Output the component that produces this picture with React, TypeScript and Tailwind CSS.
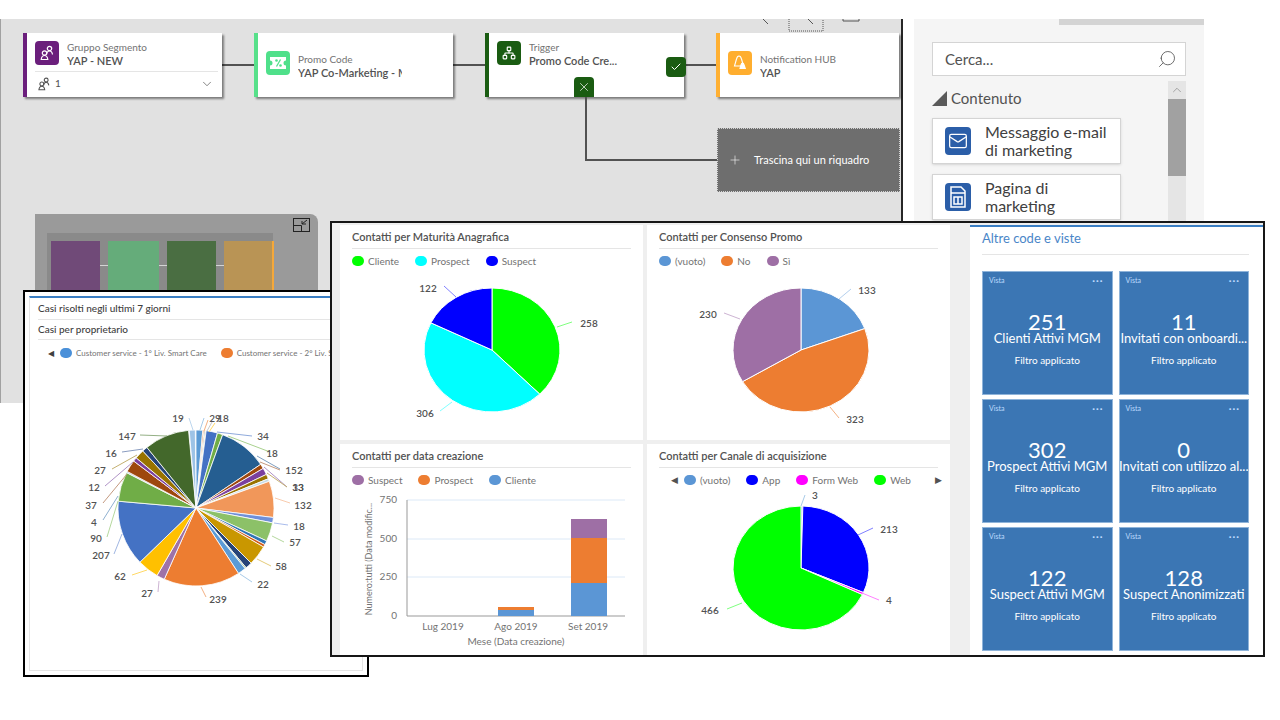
import React from "react";
import { Check, ChevronDown, ChevronUp, Network, Plus, Search, X, Mail } from "lucide-react";

type Slice = { c: string; from: number; to: number };
type Lab = { t: string; x: number; y: number };
type Lead = { x1: number; y1: number; x2: number; y2: number; c: string };

function pt(cx: number, cy: number, rx: number, ry: number, deg: number) {
  const a = (deg * Math.PI) / 180;
  return [cx + rx * Math.sin(a), cy - ry * Math.cos(a)];
}

function Pie({ cx, cy, rx, ry, slices, sw = 1 }: { cx: number; cy: number; rx: number; ry: number; slices: Slice[]; sw?: number }) {
  return (
    <g>
      {slices.map((s, i) => {
        const [x0, y0] = pt(cx, cy, rx, ry, s.from);
        const [x1, y1] = pt(cx, cy, rx, ry, s.to);
        const large = s.to - s.from > 180 ? 1 : 0;
        return <path key={i} d={`M${cx} ${cy}L${x0} ${y0}A${rx} ${ry} 0 ${large} 1 ${x1} ${y1}Z`} fill={s.c} stroke="#ffffff" strokeWidth={sw} />;
      })}
    </g>
  );
}

function fromValues(items: [string, number][]) {
  const total = items.reduce((a, b) => a + b[1], 0);
  let acc = 0;
  return items.map(([c, v]) => {
    const from = (acc / total) * 360;
    acc += v;
    return { c, from, to: (acc / total) * 360 };
  });
}

function Labels({ labels, leads }: { labels: Lab[]; leads: Lead[] }) {
  return (
    <g>
      {leads.map((l, i) => (
        <line key={i} x1={l.x1} y1={l.y1} x2={l.x2} y2={l.y2} stroke={l.c} strokeWidth={1} />
      ))}
      {labels.map((l, i) => (
        <text key={i} x={l.x} y={l.y} textAnchor="middle" dominantBaseline="central" className="fill-neutral-600 text-[10px] font-semibold">
          {l.t}
        </text>
      ))}
    </g>
  );
}

const bigSlices: Slice[] = [
  ["#5b9bd5", 0, 5], ["#ed7d31", 5, 6], ["#a5a5a5", 6, 7], ["#ffc000", 7, 7.5], ["#4472c4", 7.5, 16], ["#70ad47", 16, 20],
  ["#255e91", 20, 56], ["#9e480e", 56, 59.5], ["#7b3f9e", 59.5, 64.5], ["#997300", 64.5, 68], ["#c5dbe8", 68, 70],
  ["#f1975a", 70, 97], ["#6f8fd8", 97, 101], ["#8cc168", 101, 115], ["#2e75b6", 115, 118], ["#d05a1a", 118, 120],
  ["#c99700", 120, 135], ["#264478", 135, 140], ["#a2c28d", 140, 141], ["#5b9bd5", 141, 147], ["#ed7d31", 147, 204],
  ["#9e72a8", 204, 210], ["#ffc000", 210, 226], ["#4472c4", 226, 275], ["#70ad47", 275, 297], ["#a9c9e0", 297, 298],
  ["#9e480e", 298, 307], ["#7b3f9e", 307, 310], ["#997300", 310, 317], ["#264478", 317, 321], ["#43682b", 321, 354.5],
  ["#9dc3e6", 355, 359.5],
].map(([c, from, to]) => ({ c: c as string, from: from as number, to: to as number }));

const bigLabels: Lab[] = [
  { t: "19", x: 178, y: 419 }, { t: "29", x: 215, y: 419 }, { t: "18", x: 223, y: 419 }, { t: "34", x: 263, y: 437 },
  { t: "18", x: 272, y: 454 }, { t: "152", x: 294, y: 471 }, { t: "13", x: 298, y: 488 }, { t: "33", x: 298, y: 488 },
  { t: "132", x: 303, y: 506 }, { t: "18", x: 299, y: 527 }, { t: "57", x: 295, y: 543 }, { t: "58", x: 281, y: 567 },
  { t: "22", x: 263, y: 585 }, { t: "239", x: 218, y: 600 }, { t: "27", x: 147, y: 594 }, { t: "62", x: 120, y: 577 },
  { t: "207", x: 101, y: 556 }, { t: "90", x: 96, y: 539 }, { t: "4", x: 94, y: 523 }, { t: "37", x: 91, y: 506 },
  { t: "12", x: 94, y: 488 }, { t: "27", x: 100, y: 471 }, { t: "16", x: 111, y: 454 }, { t: "147", x: 127, y: 437 },
];

const bigLeads: Lead[] = [
  [189, 419, 193, 431, "#bcd6ee"], [204, 419, 200, 431, "#a8cbe9"], [208, 421, 204, 432, "#f4b183"], [212, 423, 207, 432, "#c9c9c9"],
  [215, 424, 209, 433, "#ffd966"], [252, 437, 217, 433, "#8faadc"], [270, 453, 228, 437, "#a9d18e"], [280, 470, 257, 457, "#7f9fc0"],
  [280, 471, 260, 463, "#c49a80"], [287, 488, 264, 468, "#b093c6"], [287, 488, 267, 474, "#c4b070"], [290, 504, 275, 499, "#f8cbad"],
  [288, 526, 274, 524, "#a9bcec"], [284, 543, 272, 537, "#b5d89e"], [271, 567, 257, 560, "#e5cb7a"], [252, 583, 240, 575, "#a8cbe9"],
  [206, 598, 201, 588, "#f4b183"], [158, 593, 159, 582, "#cdb4d3"], [132, 576, 147, 571, "#ffd966"], [114, 555, 122, 535, "#a0b6e2"],
  [107, 538, 118, 502, "#b5d89e"], [103, 521, 118, 497, "#8fb0d0"], [103, 504, 127, 475, "#c49a80"], [105, 487, 133, 463, "#b093c6"],
  [112, 470, 137, 456, "#c4b070"], [122, 453, 143, 450, "#8a9cc0"], [140, 436, 167, 437, "#94b085"],
].map(([x1, y1, x2, y2, c]) => ({ x1: x1 as number, y1: y1 as number, x2: x2 as number, y2: y2 as number, c: c as string }));

function People({ size = 16 }: { size?: number }) {
  return (
    <svg width={size} height={size} viewBox="0 0 16 16" fill="none" stroke="currentColor" strokeWidth="1.2">
      <circle cx="10.5" cy="3.5" r="2.2" />
      <path d="M7.5 9.5c.3-2 1.4-3.5 3-3.5s2.7 1.3 3 3.5" />
      <circle cx="5.5" cy="8" r="2.2" />
      <path d="M2.2 14.5c.3-2.4 1.6-4 3.3-4s3 1.6 3.3 4z" />
    </svg>
  );
}

function Ticket() {
  return (
    <svg width="18" height="16" viewBox="0 0 18 16">
      <path d="M1 2h16v3.5a2.5 2.5 0 000 5V14H1v-3.500a2.500 2.500 0 000-5z" fill="#fff" />
      <path d="M11.500 4.500l-4 7" stroke="#4fe08a" strokeWidth="1.300" fill="none" />
      <circle cx="7.500" cy="5.500" r="1.300" fill="#4fe08a" />
      <circle cx="11.500" cy="10.500" r="1.300" fill="#4fe08a" />
    </svg>
  );
}

function Notify() {
  return (
    <svg width="16" height="18" viewBox="0 0 16 18" fill="none" stroke="#fff" strokeWidth="1.100">
      <path d="M7 2c1.500 0 2 1 2.500 3l2 7H2.500l2-7C5 3 5.500 2 7 2z" />
      <path d="M10.500 9c1 0 1.300.7 1.600 2l1.200 3.500H8l1-3.500c.3-1.300.5-2 1.500-2z" fill="#fff" />
    </svg>
  );
}

function Dot({ c, t }: { c: string; t: string }) {
  return (
    <div className="flex items-center gap-1 whitespace-nowrap">
      <span className="h-2.5 w-3 shrink-0 rounded-full" style={{ backgroundColor: c }} />
      <span>{t}</span>
    </div>
  );
}

function ChartCard({ title, legend, children, legendClass }: { title: string; legend: React.ReactNode; children: React.ReactNode; legendClass?: string }) {
  return (
    <div className="flex min-h-0 flex-col overflow-hidden bg-white">
      <div className="mx-3 flex h-6 shrink-0 items-center border-b border-neutral-200 pt-0.5 text-[11px] font-semibold text-neutral-600">{title}</div>
      <div className={`flex h-6 shrink-0 items-center text-[10px] text-neutral-500 ${legendClass ?? "gap-4 pl-3"}`}>{legend}</div>
      {children}
    </div>
  );
}

function Tile({ n, label }: { n: string; label: string }) {
  return (
    <div className="flex flex-col items-center overflow-hidden border border-[#8fb4da] bg-[#3b76b4] text-white">
      <div className="flex h-4 w-full items-center justify-between pl-1.5 pr-2 text-[7px] text-blue-200">
        <span>Vista</span>
        <span className="text-[10px] font-bold leading-none tracking-widest">···</span>
      </div>
      <div className="mt-6.5 text-[22px] leading-4">{n}</div>
      <div className="whitespace-nowrap text-[13px] leading-4">{label}</div>
      <div className="mt-2 text-[10px] leading-3">Filtro applicato</div>
    </div>
  );
}

function Card({ accent, iconBg, icon, top, bottom, className, children, tall }: { accent: string; iconBg: string; icon: React.ReactNode; top: string; bottom: string; className?: string; children?: React.ReactNode; tall?: boolean }) {
  return (
    <div className={`relative h-16 shrink-0 border-l-4 bg-white shadow-[2px_2px_2px_rgba(0,0,0,0.45)] ${className ?? "w-[199px]"}`} style={{ borderColor: accent }}>
      <div className={`flex gap-2 pl-2 ${tall ? "pt-2" : "pt-5"}`}>
        <div className={`flex h-6 w-6 shrink-0 items-center justify-center rounded-sm text-white ${tall ? "" : "-mt-0.5"}`} style={{ backgroundColor: iconBg }}>
          {icon}
        </div>
        <div className="min-w-0 text-[10px] leading-[13px] text-neutral-500">
          <div>{top}</div>
          <div className="w-26 overflow-hidden whitespace-nowrap text-[11px] font-semibold text-neutral-600">{bottom}</div>
        </div>
      </div>
      {children}
    </div>
  );
}

function Line() {
  return <div className="h-0.5 w-8 shrink-0 bg-neutral-600" />;
}

export default function App() {
  return (
    <div className="relative h-screen w-screen overflow-hidden bg-white font-['Lato','Open_Sans',sans-serif]">
      {/* designer canvas */}
      <div className="absolute left-0 top-[19px] h-[384px] w-[903px] border-l border-r-2 border-l-neutral-400 border-r-neutral-800 bg-[#e1e1e1]">
        <div className="flex items-center pl-[22px] pt-3.5">
          <Card accent="#6b1f7c" iconBg="#6b1f7c" icon={<People />} top="Gruppo Segmento" bottom="YAP - NEW" tall>
            <div className="absolute left-2 right-1 top-9.5 flex h-6 items-center justify-between border-t border-neutral-200 pl-0.5 pr-1 text-[10px] text-neutral-600">
              <span className="flex items-center gap-1">
                <People size={14} />1
              </span>
              <ChevronDown size={14} strokeWidth={1.2} />
            </div>
          </Card>
          <Line />
          <Card accent="#57e08a" iconBg="#4fe08a" icon={<Ticket />} top="Promo Code" bottom="YAP Co-Marketing - M" />
          <Line />
          <Card accent="#1a5c12" iconBg="#1a5c12" icon={<Network size={14} />} top="Trigger" bottom="Promo Code Cre..." tall>
            <div className="absolute bottom-0 left-[85px] flex h-5 w-5 items-center justify-center rounded-t-sm bg-[#1a5c12] text-white">
              <X size={14} strokeWidth={1.2} />
            </div>
            <div className="absolute -right-0.5 top-6 flex h-5 w-5 items-center justify-center rounded-sm bg-[#1a5c12] text-white">
              <Check size={12} />
            </div>
          </Card>
          <Line />
          <Card accent="#ffb033" iconBg="#ffae2f" icon={<Notify />} top="Notification HUB" bottom="YAP" className="w-[183px]" />
        </div>
        <div className="absolute left-[584px] top-[78px] h-16 w-[133px] border-b-2 border-l-2 border-neutral-600" />
        <div className="absolute left-[716px] top-[109px] flex h-16 w-[183px] items-center gap-3 border border-dotted border-neutral-300 bg-[#6e6e6e] pl-2.5 text-[11px] text-white">
          <Plus size={14} strokeWidth={1} />
          <span>Trascina qui un riquadro</span>
        </div>
        <svg className="absolute left-[755px] top-0" width="110" height="14" viewBox="0 0 110 14" fill="none" stroke="#555" strokeWidth="1">
          <path d="M7 0l5 5M52 0l5 5M87 0v2h16V0" />
          <path d="M33 0v12h34V0" strokeDasharray="1 1" />
        </svg>
        {/* minimap */}
        <div className="absolute left-[34px] top-[195px] h-32 w-[283px] rounded-tr-lg bg-[#9a9a9a] pl-3 pt-[19px]">
          <div className="flex h-24 w-[226px] items-start bg-[#8a8a8a] pl-1 pt-2">
            <div className="h-20 w-[49px] shrink-0 bg-[#704a78]" />
            <div className="mt-6 h-px w-2 shrink-0 bg-neutral-300" />
            <div className="h-20 w-[51px] shrink-0 bg-[#65ac7a]" />
            <div className="mt-6 h-px w-2 shrink-0 bg-neutral-300" />
            <div className="h-20 w-[49px] shrink-0 bg-[#4a6e42]" />
            <div className="mt-6 h-px w-2 shrink-0 bg-neutral-300" />
            <div className="h-20 w-[50px] shrink-0 border-r-2 border-[#f5a83a] bg-[#b99455]" />
          </div>
          <svg className="absolute right-2 top-1" width="17" height="14" viewBox="0 0 17 14" fill="none" stroke="#222" strokeWidth="1">
            <rect x="0.5" y="0.5" width="16" height="13" />
            <path d="M0.5 7.5h8v6M9 6l5-4M9 6V3M9 6h4" />
          </svg>
        </div>
      </div>

      {/* toolbox panel */}
      <div className="absolute left-[914px] top-[19px] h-[202px] w-[290px] overflow-hidden bg-neutral-100">
        <div className="ml-[145px] h-1.5 bg-neutral-300" />
        <div className="mx-[18px] mt-[17px] flex h-[34px] items-center justify-between border border-neutral-300 bg-white pl-3 pr-2 text-[15px] text-neutral-600">
          <span>Cerca...</span>
          <Search size={20} strokeWidth={1} className="-scale-x-100" />
        </div>
        <div className="ml-[18px] mt-1.5 flex">
          <div className="w-[236px]">
            <div className="mt-1.5 flex h-5 items-center gap-1 text-[15px] text-neutral-600">
              <svg width="15" height="15" viewBox="0 0 15 15"><path d="M15 0v15H0z" fill="#5a5a5a" /></svg>
              <span>Contenuto</span>
            </div>
            <div className="mt-2.5 flex h-[46px] w-[189px] items-center gap-3.5 border border-neutral-300 bg-white pl-3 text-base leading-[18px] text-neutral-700 shadow-sm">
              <div className="flex h-7 w-[26px] shrink-0 items-center justify-center rounded-sm bg-[#2b5ea8] text-white">
                <Mail size={20} strokeWidth={1.5} />
              </div>
              <div>Messaggio e-mail<br />di marketing</div>
            </div>
            <div className="mt-2.5 flex h-[46px] w-[189px] items-center gap-3.5 border border-neutral-300 bg-white pl-3 text-base leading-[18px] text-neutral-700 shadow-sm">
              <div className="flex h-7 w-[26px] shrink-0 items-center justify-center rounded-sm bg-[#2b5ea8]">
                <svg width="18" height="22" viewBox="0 0 18 22" fill="none" stroke="#fff" strokeWidth="1.5">
                  <path d="M2 1h10l4 4v16H2zM2 7h14M5 11h8v7H5zM9 11v7" />
                </svg>
              </div>
              <div>Pagina di<br />marketing</div>
            </div>
          </div>
          <div className="-mt-px flex h-40 w-[18px] shrink-0 flex-col bg-neutral-200">
            <div className="flex h-[18px] items-center justify-center text-neutral-500">
              <ChevronUp size={14} strokeWidth={1} />
            </div>
            <div className="h-[77px] bg-neutral-400" />
          </div>
        </div>
      </div>

      {/* cases window */}
      <div className="absolute left-[23px] top-[290px] h-[387px] w-[346px] border-2 border-black bg-white p-1">
        <div className="flex h-full flex-col border border-t-2 border-neutral-200 border-t-[#3b7fc4]">
          <div className="mx-2 flex h-5.5 shrink-0 items-center border-b border-neutral-200 text-[10px] font-medium text-neutral-700">Casi risolti negli ultimi 7 giorni</div>
          <div className="mx-2 flex h-5 shrink-0 items-center border-b border-neutral-200 text-[10px] font-medium text-neutral-700">Casi per proprietario</div>
          <div className="mt-0.5 flex h-5.5 shrink-0 items-center gap-3.5 overflow-hidden whitespace-nowrap pl-[18px] text-[8px] text-neutral-500">
            <span className="-mr-2 text-neutral-700">◀</span>
            <Dot c="#4a90d9" t="Customer service - 1° Liv. Smart Care" />
            <Dot c="#ed7d31" t="Customer service - 2° Liv. Smart Care" />
          </div>
          <svg width="333" height="304" viewBox="30 365 333 304">
            <Pie cx={196} cy={509} rx={78} ry={78} slices={bigSlices} sw={0.8} />
            <Labels labels={bigLabels} leads={bigLeads} />
          </svg>
        </div>
      </div>

      {/* dashboard window */}
      <div className="absolute left-[330px] top-[221px] flex h-[436px] w-[935px] border-2 border-neutral-900 bg-[#efefef]">
        <div className="ml-2 grid w-[610px] grid-cols-2 grid-rows-[215px_1fr] gap-1 pt-0.5">
          <ChartCard
            title="Contatti per Maturità Anagrafica"
            legend={<><Dot c="#00ff00" t="Cliente" /><Dot c="#00ffff" t="Prospect" /><Dot c="#0000ff" t="Suspect" /></>}
          >
            <svg width="303" height="167" viewBox="340 273 303 167">
              <Pie cx={492} cy={350} rx={68} ry={62} slices={fromValues([["#00ff00", 258], ["#00ffff", 306], ["#0000ff", 122]])} />
              <Labels
                labels={[{ t: "258", x: 589, y: 323 }, { t: "306", x: 425, y: 413 }, { t: "122", x: 428, y: 288 }]}
                leads={[
                  { x1: 557, y1: 327, x2: 572, y2: 322, c: "#80ff80" },
                  { x1: 440, y1: 411, x2: 452, y2: 402, c: "#80ffff" },
                  { x1: 444, y1: 286, x2: 456, y2: 297, c: "#8080ff" },
                ]}
              />
            </svg>
          </ChartCard>
          <ChartCard
            title="Contatti per Consenso Promo"
            legend={<><Dot c="#5b96d5" t="(vuoto)" /><Dot c="#ed7d31" t="No" /><Dot c="#9e6fa5" t="Sì" /></>}
          >
            <svg width="303" height="167" viewBox="647 273 303 167">
              <Pie cx={801} cy={350} rx={68} ry={62} slices={fromValues([["#5b96d5", 133], ["#ed7d31", 323], ["#9e6fa5", 230]])} />
              <Labels
                labels={[{ t: "133", x: 867, y: 290 }, { t: "323", x: 855, y: 419 }, { t: "230", x: 708, y: 314 }]}
                leads={[
                  { x1: 839, y1: 299, x2: 851, y2: 289, c: "#b4d0ee" },
                  { x1: 830, y1: 407, x2: 839, y2: 418, c: "#f4b183" },
                  { x1: 724, y1: 313, x2: 740, y2: 319, c: "#cdb4d3" },
                ]}
              />
            </svg>
          </ChartCard>
          <ChartCard
            title="Contatti per data creazione"
            legend={<><Dot c="#9e6fa5" t="Suspect" /><Dot c="#ed7d31" t="Prospect" /><Dot c="#5b96d5" t="Cliente" /></>}
          >
            <svg width="303" height="163" viewBox="340 492 303 163">
              {[500, 539, 577].map((y) => (
                <line key={y} x1={407} x2={625} y1={y} y2={y} stroke="#dce9f7" />
              ))}
              <path d="M407 500V616H625" fill="none" stroke="#999" />
              <rect x={498} y={610} width={36} height={6} fill="#5b96d5" />
              <rect x={498} y={607} width={36} height={3} fill="#ed7d31" />
              <rect x={571} y={583} width={36} height={33} fill="#5b96d5" />
              <rect x={571} y={538} width={36} height={45} fill="#ed7d31" />
              <rect x={571} y={519} width={36} height={19} fill="#9e6fa5" />
              {[["750", 499], ["500", 538], ["250", 576], ["0", 615]].map(([t, y]) => (
                <text key={t as string} x={397} y={y as number} textAnchor="end" dominantBaseline="central" className="fill-neutral-500 text-[10px]">{t}</text>
              ))}
              {[["Lug 2019", 443], ["Ago 2019", 516], ["Set 2019", 588]].map(([t, x]) => (
                <text key={t as string} x={x as number} y={626} textAnchor="middle" dominantBaseline="central" className="fill-neutral-500 text-[10px]">{t}</text>
              ))}
              <text x={516} y={641} textAnchor="middle" dominantBaseline="central" className="fill-neutral-500 text-[10px]">Mese (Data creazione)</text>
              <text x={368} y={559} transform="rotate(-90 368 559)" textAnchor="middle" dominantBaseline="central" className="fill-neutral-500 text-[9px]">Numero:tutti (Data modific...</text>
            </svg>
          </ChartCard>
          <ChartCard
            title="Contatti per Canale di acquisizione"
            legendClass="gap-4 pl-6"
            legend={
              <>
                <span className="-mr-2.5 text-[9px] text-neutral-600">◀</span>
                <Dot c="#5b96d5" t="(vuoto)" />
                <Dot c="#0000ff" t="App" />
                <Dot c="#ff00ff" t="Form Web" />
                <Dot c="#00ff00" t="Web" />
                <span className="ml-2 text-[9px] text-neutral-600">▶</span>
              </>
            }
          >
            <svg className="overflow-visible" width="303" height="163" viewBox="647 492 303 163">
              <Pie cx={801} cy={568} rx={68} ry={62} slices={fromValues([["#5b96d5", 3], ["#0000ff", 213], ["#ff00ff", 4], ["#00ff00", 466]])} />
              <Labels
                labels={[{ t: "3", x: 815, y: 495 }, { t: "213", x: 889, y: 529 }, { t: "4", x: 889, y: 600 }, { t: "466", x: 710, y: 610 }]}
                leads={[
                  { x1: 801, y1: 506, x2: 805, y2: 495, c: "#a8cbe9" },
                  { x1: 858, y1: 535, x2: 873, y2: 528, c: "#8080ff" },
                  { x1: 862, y1: 593, x2: 879, y2: 600, c: "#ff80ff" },
                  { x1: 727, y1: 609, x2: 742, y2: 603, c: "#80ff80" },
                ]}
              />
            </svg>
          </ChartCard>
        </div>
        <div className="ml-5 mt-0.5 flex flex-1 flex-col border-t-2 border-[#3b7fc4] bg-white pb-1 pl-3 pr-3.5">
          <div className="flex h-7 shrink-0 items-center border-b border-neutral-200 pb-1 text-[13px] text-[#4a86c8]">Altre code e viste</div>
          <div className="mt-4 grid flex-1 grid-cols-2 grid-rows-3 gap-x-1.5 gap-y-1">
            <Tile n="251" label="Clienti Attivi MGM" />
            <Tile n="11" label="Invitati con onboardi..." />
            <Tile n="302" label="Prospect Attivi MGM" />
            <Tile n="0" label="Invitati con utilizzo al..." />
            <Tile n="122" label="Suspect Attivi MGM" />
            <Tile n="128" label="Suspect Anonimizzati" />
          </div>
        </div>
      </div>
    </div>
  );
}
